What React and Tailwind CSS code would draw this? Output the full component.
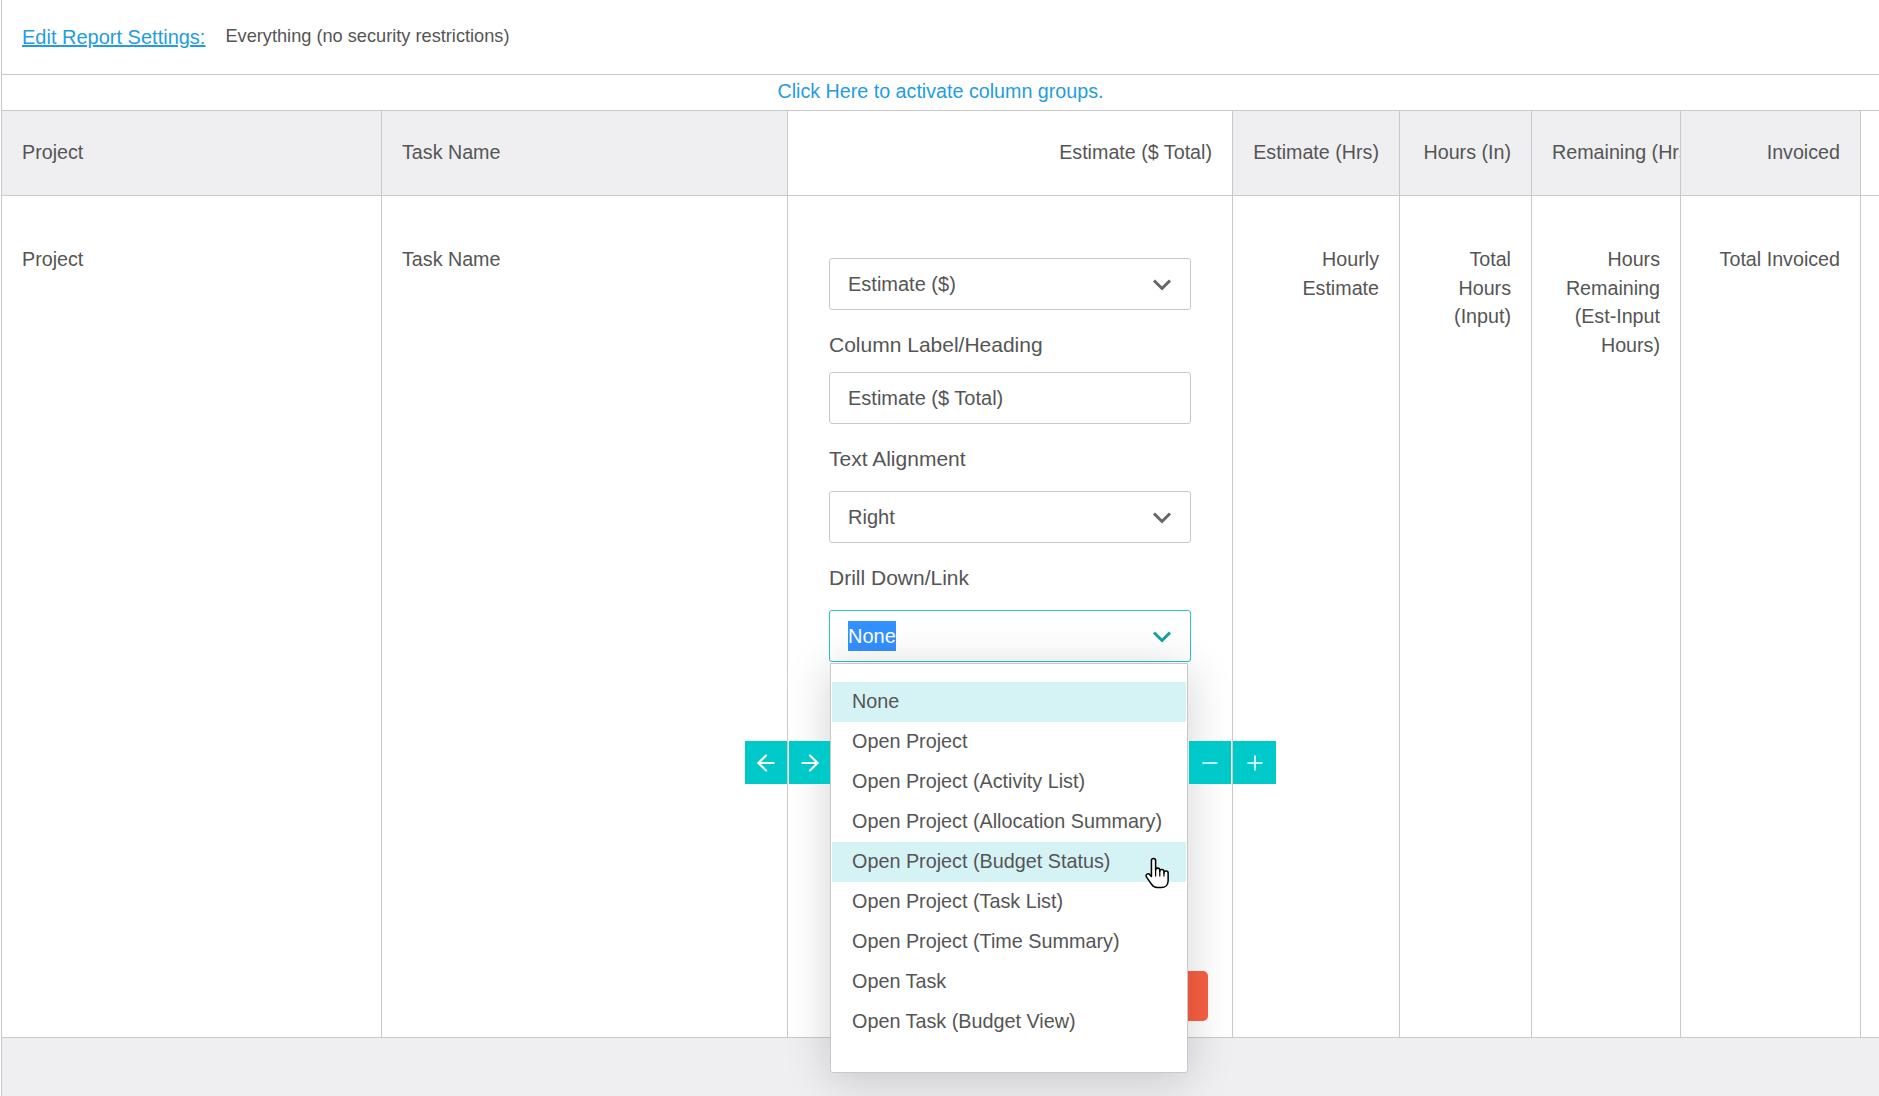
import { ArrowLeft, ArrowRight, Minus, Plus } from 'lucide-react';

const GRID = 'grid grid-cols-[380px_406px_445px_167px_132px_149px_180px_1fr]';

const HEADERS = [
  { label: 'Project', align: 'text-left', bg: 'bg-[#efeff1]' },
  { label: 'Task Name', align: 'text-left', bg: 'bg-[#efeff1]' },
  { label: 'Estimate ($ Total)', align: 'text-right', bg: 'bg-white' },
  { label: 'Estimate (Hrs)', align: 'text-right', bg: 'bg-[#efeff1]' },
  { label: 'Hours (In)', align: 'text-right', bg: 'bg-[#efeff1]' },
  { label: 'Remaining (Hrs)', align: 'text-right', bg: 'bg-[#efeff1]' },
  { label: 'Invoiced', align: 'text-right', bg: 'bg-[#efeff1]' },
];

const OPTIONS = [
  'None',
  'Open Project',
  'Open Project (Activity List)',
  'Open Project (Allocation Summary)',
  'Open Project (Budget Status)',
  'Open Project (Task List)',
  'Open Project (Time Summary)',
  'Open Task',
  'Open Task (Budget View)',
];

function Chevron({ color = '#666' }) {
  return (
    <svg width="20" height="13" viewBox="0 0 20 13" fill="none">
      <path d="M2 2.5l8 8 8-8" stroke={color} strokeWidth="3" />
    </svg>
  );
}

function Select({ value, focused }) {
  return (
    <div
      className={`h-[52px] rounded-[3px] border bg-white flex items-center justify-between pl-[18px] pr-[18px] ${
        focused ? 'border-[#22c7c7]' : 'border-[#c9c9c9]'
      }`}
    >
      {focused ? <span className="bg-[#3390ff] text-white">{value}</span> : <span>{value}</span>}
      <Chevron color={focused ? '#14a2a2' : '#666'} />
    </div>
  );
}

function BodyCell({ align, children }) {
  return (
    <div className={`relative z-10 bg-white border-r border-[#c9c9c9] px-5 pt-[49px] ${align}`}>
      {children}
    </div>
  );
}

function HandCursor() {
  return (
    <svg width="28" height="32" viewBox="0 0 20 23" className="absolute left-[1143px] top-[857px] z-40">
      <path
        d="M6 2.5a1.5 1.5 0 0 1 3 0V9.5a1.5 1.5 0 0 1 3 0V10.5a1.5 1.5 0 0 1 3 0V11.5a1.5 1.5 0 0 1 3 0V17c0 3-2 5-5 5H10c-2 0-3-1-4-2.5L2.5 14.5c-.6-.8-.4-1.8.4-2.2.8-.4 1.6-.1 2.1.6L6 14Z"
        fill="white"
        stroke="black"
        strokeWidth="1.1"
        strokeLinejoin="round"
      />
      <path d="M9 9.5V14M12 10.5V14M15 11.5V14" stroke="black" strokeWidth="0.9" />
    </svg>
  );
}

export default function App() {
  return (
    <div
      className="relative w-[1879px] h-[1096px] overflow-hidden bg-white text-[#555]"
      style={{ fontFamily: '"Liberation Sans", Arial, sans-serif' }}
    >
      <div className="ml-px border-l border-[#c9c9c9] h-full flex flex-col">
        {/* report settings */}
        <div className="h-[75px] shrink-0 border-b border-[#c9c9c9] flex items-center pl-[20px]">
          <a href="#" className="text-[20px] text-[#1f9de0] underline">
            Edit Report Settings:
          </a>
          <span className="ml-[20px] text-[18.2px]">Everything (no security restrictions)</span>
        </div>

        <div className="h-[36px] shrink-0 border-b border-[#c9c9c9] flex items-center justify-center pb-[2px] text-[19.7px] text-[#1f9de0]">
          Click Here to activate column groups.
        </div>

        {/* header row */}
        <div className={`${GRID} h-[85px] shrink-0 border-b border-[#c9c9c9] text-[19.7px]`}>
          {HEADERS.map((h) => (
            <div
              key={h.label}
              className={`${h.bg} ${h.align} border-r border-[#c9c9c9] px-5 leading-[82px] whitespace-nowrap overflow-hidden`}
            >
              {h.label}
            </div>
          ))}
          <div className="bg-white" />
        </div>

        {/* body row */}
        <div className={`${GRID} h-[842px] shrink-0 border-b border-[#c9c9c9] text-[19.7px] leading-[28.5px]`}>
          <BodyCell align="text-left">Project</BodyCell>
          <BodyCell align="text-left">Task Name</BodyCell>

          <div className="border-r border-[#c9c9c9] pl-[41px] pr-[41px] pt-[62px] leading-normal text-[20px]">
            <Select value="Estimate ($)" />
            <div className="mt-[21px] text-[21px] leading-[28px]">Column Label/Heading</div>
            <div className="mt-[13px] h-[52px] rounded-[3px] border border-[#c9c9c9] flex items-center pl-[18px]">
              Estimate ($ Total)
            </div>
            <div className="mt-[21px] text-[21px] leading-[28px]">Text Alignment</div>
            <div className="mt-[18px]">
              <Select value="Right" />
            </div>
            <div className="mt-[21px] text-[21px] leading-[28px]">Drill Down/Link</div>
            <div className="mt-[18px]">
              <Select value="None" focused />
            </div>
          </div>

          <BodyCell align="text-right">Hourly Estimate</BodyCell>
          <BodyCell align="text-right">Total Hours (Input)</BodyCell>
          <BodyCell align="text-right">Hours Remaining (Est-Input Hours)</BodyCell>
          <BodyCell align="text-right">Total Invoiced</BodyCell>
          <div className="relative z-10 bg-white" />
        </div>

        <div className="flex-1 bg-[#efeff1]" />
      </div>

      {/* column move / resize controls */}
      <div className="absolute left-[745px] top-[741px] z-20 flex gap-[2px]">
        <button className="w-[42px] h-[43px] bg-[#00c9c9] flex items-center justify-center text-white">
          <ArrowLeft size={26} strokeWidth={2} />
        </button>
        <button className="w-[41px] h-[43px] bg-[#00c9c9] flex items-center justify-center text-white">
          <ArrowRight size={26} strokeWidth={2} />
        </button>
      </div>
      <div className="absolute left-[1189px] top-[741px] z-20 flex gap-[2px]">
        <button className="w-[42px] h-[43px] bg-[#00c9c9] flex items-center justify-center text-white">
          <Minus size={24} strokeWidth={1.6} />
        </button>
        <button className="w-[43px] h-[43px] bg-[#00c9c9] flex items-center justify-center text-white">
          <Plus size={24} strokeWidth={1.6} />
        </button>
      </div>

      {/* delete button, mostly hidden under the open list */}
      <div className="absolute left-[1080px] top-[971px] z-[4] w-[128px] h-[50px] rounded-[5px] bg-[#f95f43]" />

      {/* open drill-down list */}
      <div className="absolute left-[830px] top-[663px] z-[5] w-[358px] h-[410px] bg-white border border-[#c9c9c9] rounded-b-[3px] px-px pt-[18px] shadow-[0_6px_45px_rgba(0,0,0,0.18)] text-[19.8px]">
        {OPTIONS.map((opt, i) => (
          <div
            key={opt}
            className={`h-[40px] flex items-center pl-[20px] whitespace-nowrap ${
              i === 0 || i === 4 ? 'bg-[#d5f3f5]' : ''
            }`}
          >
            {opt}
          </div>
        ))}
      </div>

      <HandCursor />
    </div>
  );
}
